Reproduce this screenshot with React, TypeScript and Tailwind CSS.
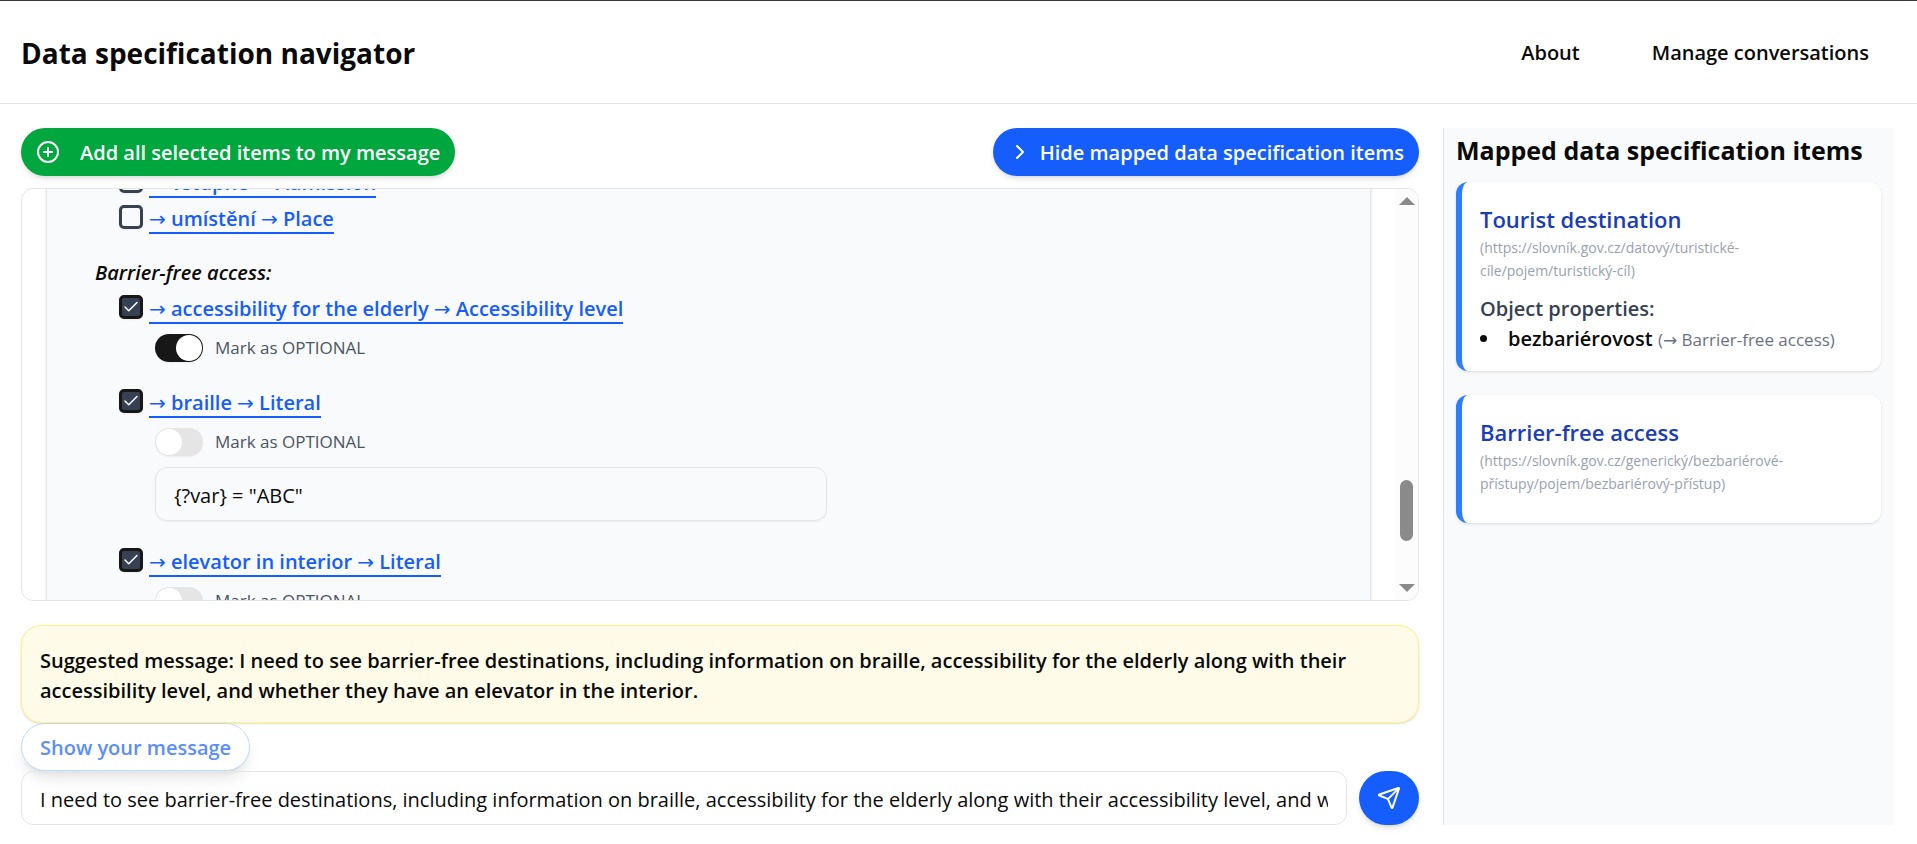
import { useState } from "react";
import { Check, ChevronRight, CirclePlus, Send } from "lucide-react";

const SUGGESTION =
  "I need to see barrier-free destinations, including information on braille, accessibility for the elderly along with their accessibility level, and whether they have an elevator in the interior.";

type Item = {
  id: string;
  label: string;
  target: string;
  selected: boolean;
  optional?: boolean;
  filter?: string;
};

const touristItems: Item[] = [
  { id: "admission", label: "vstupné", target: "Admission", selected: false },
  { id: "place", label: "umístění", target: "Place", selected: false },
];

const accessItems: Item[] = [
  { id: "elderly", label: "accessibility for the elderly", target: "Accessibility level", selected: true, optional: true },
  { id: "braille", label: "braille", target: "Literal", selected: true, filter: '{?var} = "ABC"' },
  { id: "elevator", label: "elevator in interior", target: "Literal", selected: true, filter: "" },
];

function Arrow() {
  return <span className="font-['DejaVu_Sans',sans-serif] leading-none font-normal">→</span>;
}

function PropertyItem({ item }: { item: Item }) {
  const [selected, setSelected] = useState(item.selected);
  const [optional, setOptional] = useState(Boolean(item.optional));
  const [filter, setFilter] = useState(item.filter ?? "");

  return (
    <li>
      <div className="flex items-start gap-1.5">
        <span className="mt-px grid size-6 shrink-0">
          <input
            type="checkbox"
            aria-label={`Select ${item.label}`}
            checked={selected}
            onChange={(e) => setSelected(e.target.checked)}
            className="col-start-1 row-start-1 size-6 appearance-none rounded-[5px] border-3 border-[#364153] shadow-xs checked:border-[#171717] checked:bg-[#364153]"
          />
          {selected && (
            <Check className="pointer-events-none col-start-1 row-start-1 size-[18px] place-self-center text-white" strokeWidth={2} />
          )}
        </span>
        <a href="#" className="border-b-2 border-[#155dfc] pt-0.5 text-[20px] leading-[26px] font-semibold text-[#155dfc]">
          <Arrow /> {item.label} <Arrow /> {item.target}
        </a>
      </div>
      {selected && (
        <div className="mt-2.5 mb-[26px] ml-9">
          <label className="flex items-center gap-3 text-[17px] leading-7 text-[#4a5565]">
            <input
              type="checkbox"
              role="switch"
              checked={optional}
              onChange={(e) => setOptional(e.target.checked)}
              className="h-7 w-12 shrink-0 appearance-none rounded-full bg-[#e5e5e5] p-px shadow-xs before:block before:size-[26px] before:rounded-full before:bg-white checked:bg-[#171717] checked:pl-[21px]"
            />
            Mark as OPTIONAL
          </label>
          {item.filter !== undefined && (
            <input
              type="text"
              aria-label={`Filter for ${item.label}`}
              value={filter}
              onChange={(e) => setFilter(e.target.value)}
              className="mt-[11px] block h-[54px] w-full max-w-[672px] rounded-xl border border-[#e5e5e5] px-[18px] pt-0.5 text-[20px] text-[#0a0a0a] shadow-xs"
            />
          )}
        </div>
      )}
    </li>
  );
}

function Scrollbar() {
  return (
    <div className="flex w-[23px] shrink-0 flex-col items-center bg-[#fcfcfc] py-2" aria-hidden="true">
      <svg className="h-2 w-4 fill-[#8a8a8a]" viewBox="0 0 16 8">
        <path d="M8 0 16 8H0Z" />
      </svg>
      <div className="flex-[275]" />
      <div className="h-[61px] w-[13px] rounded-full bg-[#8a8a8a]" />
      <div className="flex-[43]" />
      <svg className="h-2 w-4 fill-[#8a8a8a]" viewBox="0 0 16 8">
        <path d="M0 0H16L8 8Z" />
      </svg>
    </div>
  );
}

type CardProps = { title: string; iri: string; property?: { name: string; target: string } };

function MappedCard({ title, iri, property }: CardProps) {
  return (
    <article className="rounded-xl border-l-6 border-[#2b7fff] bg-white pt-5 pr-4 pb-4 pl-[18px] shadow-sm">
      <h3 className="text-[22px] leading-[34px] font-semibold text-[#193cb8]">{title}</h3>
      <p className="max-w-[340px] text-[14px] leading-[23px] text-[#99a1af]">{`(${iri})`}</p>
      {property ? (
        <>
          <h4 className="mt-3 text-[20px] leading-[30px] font-semibold text-[#364153]">Object properties:</h4>
          <ul className="list-inside list-disc text-[20px] leading-[30px]">
            <li>
              <span className="font-semibold">{property.name}</span>{" "}
              <span className="text-[17px] text-[#6a7282]">
                (<Arrow /> {property.target})
              </span>
            </li>
          </ul>
        </>
      ) : (
        <div className="h-3" />
      )}
    </article>
  );
}

export default function App() {
  const [message, setMessage] = useState(SUGGESTION);

  return (
    <div className="flex h-screen min-h-[640px] flex-col border-t border-[#3a383e] bg-white font-['Open_Sans','Noto_Sans',sans-serif] text-[#0a0a0a]">
      <header className="flex h-[103px] shrink-0 items-center justify-between border-b border-[#e5e5e5] pt-0.5 pr-12 pl-[21px]">
        <h1 className="text-[28px] font-bold">Data specification navigator</h1>
        <nav className="flex gap-[72px] text-[20px] font-semibold">
          <a href="#">About</a>
          <a href="#">Manage conversations</a>
        </nav>
      </header>

      <div className="flex min-h-0 flex-1 gap-6 pt-6 pr-6 pb-[19px] pl-[21px]">
        <main className="flex min-w-0 flex-1 flex-col">
          <div className="flex justify-between">
            <button className="flex h-12 items-center gap-5 rounded-full bg-[#00a63e] px-[15px] text-[20px] font-semibold text-white shadow-md">
              <CirclePlus className="size-6" strokeWidth={2} />
              <span className="pt-0.5">Add all selected items to my message</span>
            </button>
            <button className="flex h-12 items-center gap-2 rounded-full bg-[#155dfc] px-[15px] text-[20px] font-semibold text-white shadow-md">
              <ChevronRight className="size-6" strokeWidth={2} />
              <span className="pt-0.5">Hide mapped data specification items</span>
            </button>
          </div>

          <section className="mt-3 flex min-h-0 flex-1 overflow-hidden rounded-xl border border-[#e5e5e5]">
            <div className="min-w-0 flex-1 overflow-hidden px-6">
              <div className="-mt-[22px] border border-[#e5e5e5] bg-[#f9fafb] px-12 shadow-sm">
                <ul className="flex flex-col gap-1.5 pl-6">
                  {touristItems.map((item) => (
                    <PropertyItem key={item.id} item={item} />
                  ))}
                </ul>
                <h2 className="mt-6 text-[20px] leading-[30px] font-semibold italic">Barrier-free access:</h2>
                <ul className="mt-1.5 pl-6">
                  {accessItems.map((item) => (
                    <PropertyItem key={item.id} item={item} />
                  ))}
                </ul>
              </div>
            </div>
            <Scrollbar />
          </section>

          <p className="mt-6 rounded-[20px] border border-[#fff085] bg-[#fefce8] px-[18px] pt-5 pb-4 text-[20px] leading-[30px] font-semibold shadow-sm">
            {`Suggested message: ${SUGGESTION}`}
          </p>
          <button className="h-12 self-start rounded-full border border-[#bedbff] bg-white px-[18px] pt-0.5 text-[20px] font-semibold text-[#5b8efd] shadow-lg">
            Show your message
          </button>
          <form className="flex gap-3" onSubmit={(e) => e.preventDefault()}>
            <input
              type="text"
              aria-label="Your message"
              value={message}
              onChange={(e) => setMessage(e.target.value)}
              className="h-[54px] min-w-0 flex-1 rounded-xl border border-[#e5e5e5] px-[18px] pt-0.5 text-[20px]"
            />
            <button
              type="submit"
              aria-label="Send message"
              className="flex h-[54px] w-[60px] items-center justify-center rounded-full bg-[#155dfc] text-white shadow-md"
            >
              <Send className="size-6" strokeWidth={2} />
            </button>
          </form>
        </main>

        <aside className="flex w-[450px] shrink-0 flex-col border-l border-[#e5e5e5] bg-[#f9fafb] px-3 pt-1">
          <h2 className="mb-3.5 text-[25px] leading-9 font-bold whitespace-nowrap">Mapped data specification items</h2>
          <div className="flex flex-col gap-6">
            <MappedCard
              title="Tourist destination"
              iri="https://slovník.gov.cz/datový/turistické-cíle/pojem/turistický-cíl"
              property={{ name: "bezbariérovost", target: "Barrier-free access" }}
            />
            <MappedCard
              title="Barrier-free access"
              iri="https://slovník.gov.cz/generický/bezbariérové-přístupy/pojem/bezbariérový-přístup"
            />
          </div>
        </aside>
      </div>
    </div>
  );
}
